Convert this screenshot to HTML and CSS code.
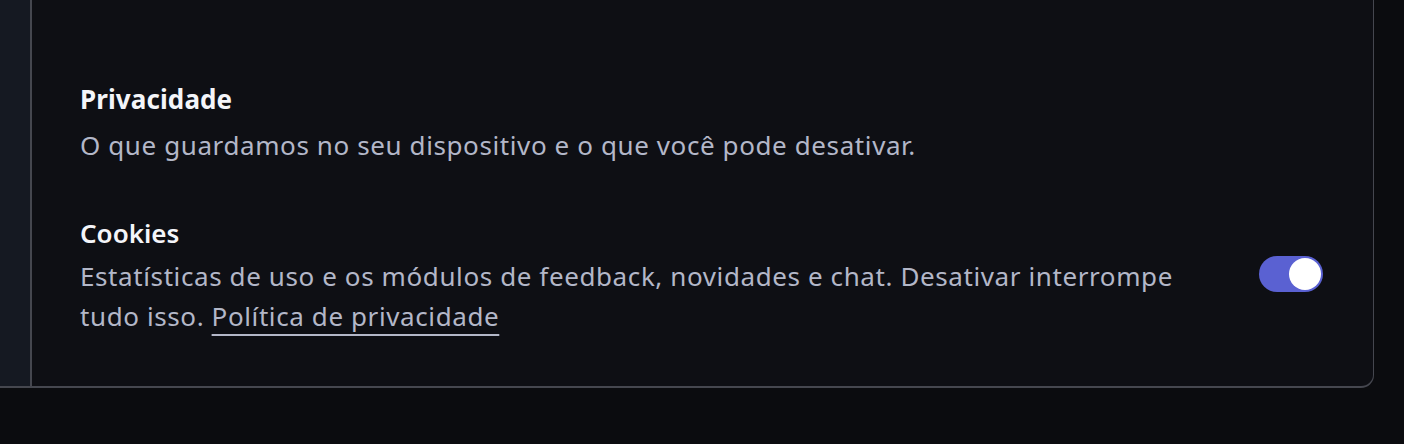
FILE: index.html
```html
<!DOCTYPE html>
<html lang="pt-BR">
<head>
<meta charset="utf-8">
<title>Privacidade</title>
<link rel="stylesheet" href="styles.css">
</head>
<body>
<div class="card">
  <aside class="sidebar"></aside>
  <main class="content">
    <section class="group">
      <h2 class="group-title">Privacidade</h2>
      <p class="group-desc">O que guardamos no seu dispositivo e o que você pode desativar.</p>
    </section>
    <section class="setting">
      <div class="setting-text">
        <h3 class="setting-title">Cookies</h3>
        <p class="setting-desc">Estatísticas de uso e os módulos de feedback, novidades e chat. Desativar interrompe tudo isso. <a class="link" href="#">Política de privacidade</a></p>
      </div>
      <label class="switch">
        <input type="checkbox" class="switch-input" checked>
        <span class="switch-track"><span class="switch-knob"></span></span>
      </label>
    </section>
  </main>
</div>
</body>
</html>
```
FILE: styles.css
```css
* { box-sizing: border-box; }
html, body { margin: 0; padding: 0; }
body {
  background: #0b0c0f;
  font-family: "Noto Sans", "Open Sans", sans-serif;
  width: 1404px;
  height: 444px;
  overflow: hidden;
}
.card {
  display: flex;
  width: 1374px;
  height: 388px;
  border-right: 1.5px solid #45474f;
  border-bottom: 2px solid #45474f;
  border-bottom-right-radius: 13px;
  overflow: hidden;
  background: #0e0f14;
}
.sidebar {
  width: 32px;
  flex: none;
  background: #151922;
  border-right: 2px solid #45474f;
}
.content {
  flex: 1;
  padding: 82px 50px 0 48px;
}
.group-title {
  margin: 0;
  font-size: 26px;
  line-height: 34px;
  font-weight: 700;
  letter-spacing: 0.1px;
  color: #f4f5f9;
}
.group-desc {
  margin: 9px 0 0 0;
  font-size: 26px;
  line-height: 40px;
  letter-spacing: 0.6px;
  color: #b3b7c8;
}
.setting {
  display: flex;
  align-items: center;
  gap: 48px;
  margin-top: 51px;
}
.setting-text { flex: 1; }
.setting-title {
  margin: 0;
  font-size: 26px;
  line-height: 34px;
  font-weight: 600;
  color: #f4f5f9;
}
.setting-desc {
  margin: 6px 0 0 0;
  font-size: 26px;
  line-height: 40px;
  letter-spacing: 0.6px;
  color: #b3b7c8;
}
.link {
  color: #b3b7c8;
  text-decoration: underline;
  text-decoration-thickness: 1.5px;
  text-underline-offset: 8px;
}
.switch { flex: none; display: block; margin-bottom: 5px; cursor: pointer; }
.switch-input { display: none; }
.switch-track {
  display: flex;
  align-items: center;
  justify-content: flex-end;
  width: 64px;
  height: 36px;
  padding: 2px;
  border-radius: 18px;
  background: #5a61d2;
}
.switch-knob {
  width: 32px;
  height: 32px;
  border-radius: 50%;
  background: #ffffff;
}
```
